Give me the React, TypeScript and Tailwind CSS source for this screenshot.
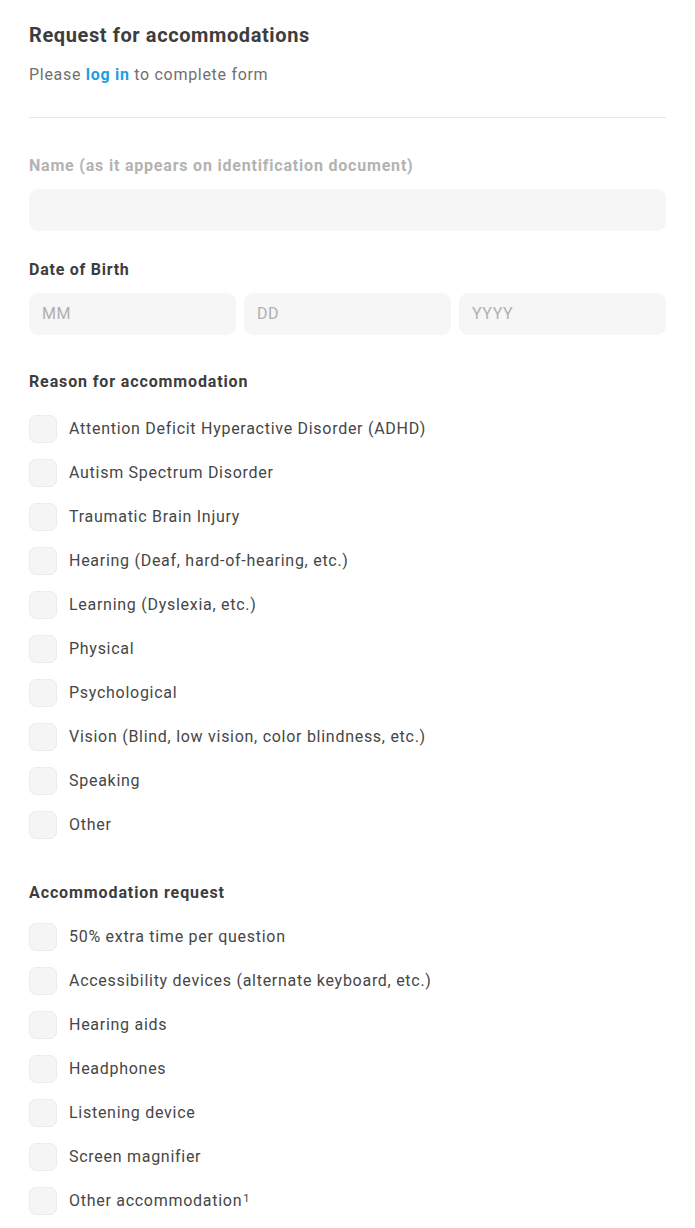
import React from "react";

const reasons = [
  "Attention Deficit Hyperactive Disorder (ADHD)",
  "Autism Spectrum Disorder",
  "Traumatic Brain Injury",
  "Hearing (Deaf, hard-of-hearing, etc.)",
  "Learning (Dyslexia, etc.)",
  "Physical",
  "Psychological",
  "Vision (Blind, low vision, color blindness, etc.)",
  "Speaking",
  "Other",
];

const requests = [
  "50% extra time per question",
  "Accessibility devices (alternate keyboard, etc.)",
  "Hearing aids",
  "Headphones",
  "Listening device",
  "Screen magnifier",
];

function Check({ children }: { children: React.ReactNode }) {
  return (
    <label className="flex items-center h-[44px]">
      <span className="w-[28px] h-[28px] rounded-[7px] bg-[#f5f5f5] border border-[#ececec] shrink-0" />
      <span className="ml-[12px] text-[16px] text-[#464646] tracking-[0.72px]">{children}</span>
    </label>
  );
}

export default function App() {
  return (
    <div
      className="bg-white w-[695px] min-h-[1228px] px-[29px] pt-[22px]"
      style={{ fontFamily: "Roboto, 'Liberation Sans', sans-serif" }}
    >
      <h1 className="text-[20px] font-bold text-[#3d3d3d] leading-[26px] tracking-[0.6px]">Request for accommodations</h1>
      <p className="mt-[16px] text-[16px] text-[#6f6f6f] leading-[22px] tracking-[0.7px]">
        Please <span className="text-[#1e9ee0] font-bold">log in</span> to complete form
      </p>
      <div className="mt-[31px] h-px bg-[#e6e6e6]" />

      <div className="mt-[37px] text-[16px] font-bold text-[#b3b3b3] leading-[22px] tracking-[0.8px]">
        Name (as it appears on identification document)
      </div>
      <div className="mt-[12px] h-[42px] rounded-[9px] bg-[#f6f6f6]" />

      <div className="mt-[28px] text-[16px] font-bold text-[#3d3d3d] leading-[22px] tracking-[0.75px]">Date of Birth</div>
      <div className="mt-[12px] grid grid-cols-3 gap-[8px]">
        {["MM", "DD", "YYYY"].map((p) => (
          <div key={p} className="h-[42px] rounded-[9px] bg-[#f6f6f6] flex items-center px-[13px] text-[16px] text-[#b0b0b0] tracking-[0.6px]">
            {p}
          </div>
        ))}
      </div>

      <div className="mt-[36px] text-[16px] font-bold text-[#3d3d3d] leading-[22px] tracking-[0.87px]">Reason for accommodation</div>
      <div className="mt-[14px] flex flex-col">
        {reasons.map((r) => (
          <Check key={r}>{r}</Check>
        ))}
      </div>

      <div className="mt-[35px] text-[16px] font-bold text-[#3d3d3d] leading-[22px] tracking-[0.9px]">Accommodation request</div>
      <div className="mt-[11px] flex flex-col">
        {requests.map((r) => (
          <Check key={r}>{r}</Check>
        ))}
        <Check>
          Other accommodation<sup className="text-[11px] ml-[1px] relative top-[-4px]">1</sup>
        </Check>
      </div>
    </div>
  );
}
